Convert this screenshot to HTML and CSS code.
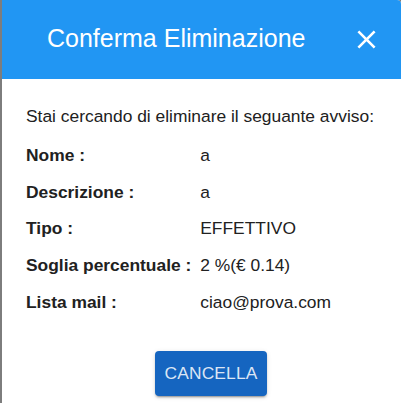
FILE: index.html
```html
<!DOCTYPE html>
<html lang="it">
<head>
<meta charset="utf-8">
<title>Conferma Eliminazione</title>
<link rel="stylesheet" href="styles.css">
</head>
<body>
<div class="dialog">
  <header class="dialog-header">
    <h2 class="dialog-title">Conferma Eliminazione</h2>
    <button class="close-btn" aria-label="Chiudi">
      <svg viewBox="0 0 24 24" width="31" height="31"><path fill="#fff" d="M19 6.41L17.59 5 12 10.59 6.41 5 5 6.41 10.59 12 5 17.59 6.41 19 12 13.41 17.59 19 19 17.59 13.41 12z"/></svg>
    </button>
  </header>
  <div class="dialog-body">
    <p class="intro">Stai cercando di eliminare il seguante avviso:</p>
    <table class="details">
      <tr><td class="label">Nome :</td><td class="value">a</td></tr>
      <tr><td class="label">Descrizione :</td><td class="value">a</td></tr>
      <tr><td class="label">Tipo :</td><td class="value">EFFETTIVO</td></tr>
      <tr><td class="label">Soglia percentuale :</td><td class="value">2 %(€ 0.14)</td></tr>
      <tr><td class="label">Lista mail :</td><td class="value">ciao@prova.com</td></tr>
    </table>
    <div class="actions">
      <button class="btn-primary">CANCELLA</button>
    </div>
  </div>
</div>
</body>
</html>
```

FILE: styles.css
```css
html, body {
  margin: 0;
  padding: 0;
  height: 100%;
}
body {
  background: #7d7d7d;
  font-family: "Liberation Sans", Arial, sans-serif;
  overflow: hidden;
}
.dialog {
  margin-left: 2px;
  height: 100%;
  background: #fff;
  border-top-right-radius: 4px;
  overflow: hidden;
}
.dialog-header {
  height: 79px;
  background: #2196f3;
  display: flex;
  align-items: center;
  padding: 0 19px 2px 45px;
  box-sizing: border-box;
}
.dialog-title {
  margin: 0;
  flex: 1;
  color: #fff;
  font-size: 25px;
  font-weight: normal;
}
.close-btn {
  border: 0;
  background: none;
  padding: 0;
  margin: 0;
  display: flex;
  margin-top: 2px;
}
.dialog-body {
  padding: 0 24px;
  color: #212121;
  font-size: 17.4px;
  line-height: 20px;
}
.intro {
  margin: 27px 0 0;
}
.details {
  border-collapse: collapse;
  margin-top: 10.6px;
}
.details td {
  padding: 8.375px 0;
  white-space: nowrap;
}
.details .label {
  font-weight: bold;
  padding-right: 9px;
}
.actions {
  display: flex;
  justify-content: center;
  padding-left: 19px;
  margin-top: 30.6px;
}
.btn-primary {
  height: 45px;
  padding: 0 9px;
  border: 0;
  border-radius: 4px;
  background: #1565c0;
  color: rgba(255, 255, 255, 0.86);
  font-family: "Liberation Sans", Arial, sans-serif;
  font-size: 17.4px;
  letter-spacing: 0.15px;
  box-shadow: 0 3px 1px -2px rgba(0,0,0,0.2), 0 2px 2px 0 rgba(0,0,0,0.14), 0 1px 5px 0 rgba(0,0,0,0.12);
}
```
